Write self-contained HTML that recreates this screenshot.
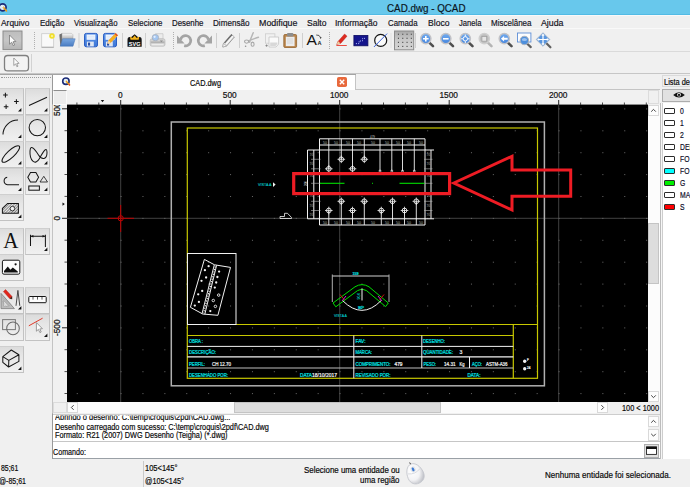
<!DOCTYPE html>
<html lang="pt-BR">
<head>
<meta charset="utf-8">
<title>CAD.dwg - QCAD</title>
<style>
html,body{margin:0;padding:0;}
body{width:690px;height:487px;overflow:hidden;background:#f0f0f0;position:relative;
 font-family:"Liberation Sans","DejaVu Sans",sans-serif;font-size:8.3px;color:#111;}
.abs{position:absolute;}
.tx{position:absolute;white-space:nowrap;display:inline-block;transform-origin:0 50%;-webkit-text-stroke:0.18px currentColor;}
svg{position:absolute;overflow:visible;}
#title{left:0;top:0;width:690px;height:15px;background:#68c8ec;box-sizing:border-box;border-bottom:1px solid #52bbe5;}
#menubar{left:0;top:15px;width:690px;height:14px;background:#f0f0f0;box-sizing:border-box;border-top:1px solid #f9f9f9;border-bottom:1px solid #f9f9f9;}
#tb1{left:0;top:29px;width:690px;height:22px;background:#f0f0f0;border-bottom:1px solid #dadada;}
#tb2{left:0;top:52px;width:690px;height:21px;background:#f0f0f0;}
#sepline{left:0;top:73px;width:690px;height:1px;background:#c6c6c6;}
#sepline2{left:0;top:74px;width:356px;height:1px;background:#a4a4a4;}
#left{left:0;top:75px;width:52px;height:384px;background:#f0f0f0;}
.tbtn{position:absolute;width:23px;height:25px;border:1px solid #c2c2c2;border-top-color:#cfcfcf;border-left-color:#cdcdcd;
 background:linear-gradient(#dcdcdc,#e6e6e6 35%,#f0f0f0);box-sizing:content-box;}
#leftborder{left:52px;top:75px;width:1px;height:384px;background:linear-gradient(#999 0,#999 29px,#c4c4c4 30px,#c4c4c4 338px,#999 339px);}
#tab{left:53px;top:75px;width:302px;height:15px;background:#fff;}
#tabline{left:355px;top:89px;width:305px;height:1px;background:#c4c4c4;}
#tabside{left:355px;top:75px;width:1px;height:14px;background:#c4c4c4;}
#hruler{left:67px;top:90px;width:581px;height:15px;background:#f1f1f1;overflow:hidden;}
#vruler{left:53px;top:105px;width:14px;height:297px;background:#f1f1f1;overflow:hidden;}
#corner{left:53px;top:90px;width:14px;height:15px;background:#ececec;border:1px solid #fafafa;border-top-color:#8e8e8e;box-sizing:border-box}
#canvas{left:67px;top:105px;width:581px;height:297px;background:#000;overflow:hidden;}
#vscroll{left:648px;top:105px;width:12px;height:297px;background:#fcfcfc;}
#vcorner{left:648px;top:90px;width:11px;height:14px;background:#f0f0f0;border:1px solid #dcdcdc;box-sizing:border-box;}
#vthumb{left:648px;top:223px;width:11px;height:61px;background:#dddddd;border:1px solid #c4c4c4;box-sizing:border-box;}
#hscroll{left:67px;top:402px;width:541px;height:11px;background:#fbfbfb;}
#hthumb{left:234px;top:402px;width:207px;height:11px;background:#dddddd;border:1px solid #c4c4c4;box-sizing:border-box;}
#hcorner{left:53px;top:402px;width:14px;height:11px;background:#f0f0f0;border:1px solid #dcdcdc;box-sizing:border-box;}
.sbtn{position:absolute;background:#fdfdfd;border:1px solid #d9d9d9;box-sizing:border-box;}
#rightborder{left:660px;top:103px;width:3px;height:356px;background:linear-gradient(90deg,#bcbcbc 0,#bcbcbc 33%,#f6f6f6 33%,#f6f6f6 67%,#cdcdcd 67%);}
#rhead{left:662px;top:75px;width:28px;height:12px;background:#f0f0f0;border:1px solid #dadada;border-right:none;box-sizing:border-box;}
#eyebtn{left:662px;top:89px;width:30px;height:13px;background:#e1e1e1;border:1px solid #adadad;box-sizing:border-box;}
#rlist{left:663px;top:103px;width:27px;height:356px;background:#fff;}
.sw{position:absolute;left:664px;width:11px;height:6px;border:1px solid #2c2c2c;box-sizing:border-box;border-radius:1px;}
#log{left:53px;top:414px;width:607px;height:26px;background:#fff;border-top:1px solid #cdcdcd;border-bottom:1px solid #c6c6c6;overflow:hidden;box-sizing:content-box;}
#cmd{left:53px;top:442px;width:607px;height:16px;background:#fff;}
#cmdline{left:53px;top:458px;width:607px;height:1px;background:#9aa0a6;}
#logscroll{left:648px;top:415px;width:12px;height:26px;background:#f0f0f0;}
#status{left:0;top:459px;width:690px;height:28px;background:#f0f0f0;}
#stsep{left:143px;top:461px;width:1px;height:26px;background:#c9c9c9;}
</style>
</head>
<body>

<!-- title bar -->
<div id="title" class="abs"></div>
<!-- menu bar -->
<div id="menubar" class="abs"></div>
<!-- toolbars -->
<div id="tb1" class="abs"></div>
<div id="tb2" class="abs"></div>
<div id="sepline" class="abs"></div>
<div id="sepline2" class="abs"></div>

<!-- left tool panel -->
<div id="left" class="abs"></div>
<div class="tbtn" style="left:-1px;top:88px"></div>
<div class="tbtn" style="left:25px;top:88px"></div>
<div class="tbtn" style="left:-1px;top:114.5px"></div>
<div class="tbtn" style="left:25px;top:114.5px"></div>
<div class="tbtn" style="left:-1px;top:141px"></div>
<div class="tbtn" style="left:25px;top:141px"></div>
<div class="tbtn" style="left:-1px;top:167.5px"></div>
<div class="tbtn" style="left:25px;top:167.5px"></div>
<div class="tbtn" style="left:-1px;top:194px"></div>
<div class="tbtn" style="left:-1px;top:227.5px"></div>
<div class="tbtn" style="left:25px;top:227.5px"></div>
<div class="tbtn" style="left:-1px;top:254px"></div>
<div class="tbtn" style="left:-1px;top:287px"></div>
<div class="tbtn" style="left:25px;top:287px"></div>
<div class="tbtn" style="left:-1px;top:313.5px"></div>
<div class="tbtn" style="left:25px;top:313.5px"></div>
<div class="tbtn" style="left:-1px;top:345.5px"></div>
<div class="abs" style="left:1px;top:77px;width:50px;height:0;border-top:1px dotted #9a9a9a"></div>
<div id="leftborder" class="abs"></div>

<!-- document area -->
<div id="tab" class="abs"></div>
<div id="tabline" class="abs"></div>
<div id="tabside" class="abs"></div>
<div id="corner" class="abs"></div>
<div id="hruler" class="abs"></div>
<div id="vruler" class="abs"></div>
<div class="abs" style="left:67px;top:104px;width:581px;height:1px;background:#8a8a8a"></div>
<div id="canvas" class="abs">
<svg style="left:0;top:0" width="581" height="297" viewBox="67 105 581 297" font-family="Liberation Sans, sans-serif">
<defs><pattern id="grid" x="120.55" y="217.9" width="21.9" height="21.9" patternUnits="userSpaceOnUse"><rect x="0" y="0" width="1" height="1" fill="#6a6a6a"/></pattern></defs>
<rect x="67" y="105" width="581" height="297" fill="#000"/>
<line x1="120.70" y1="105" x2="120.70" y2="402" stroke="#414141" stroke-width="1"/>
<line x1="339.70" y1="105" x2="339.70" y2="402" stroke="#414141" stroke-width="1"/>
<line x1="558.70" y1="105" x2="558.70" y2="402" stroke="#414141" stroke-width="1"/>
<line x1="67" y1="218.3" x2="648" y2="218.3" stroke="#414141" stroke-width="1"/>
<rect x="67" y="105" width="581" height="297" fill="url(#grid)"/>
<rect x="171.3" y="122" width="373.09999999999997" height="263.8" fill="none" stroke="#b0b0b0" stroke-width="1.5"/>
<rect x="187.3" y="128" width="350.2" height="250.3" fill="none" stroke="#c8c800" stroke-width="1.2"/>
<line x1="187.3" y1="324.5" x2="537.5" y2="324.5" stroke="#c8c800" stroke-width="1.2"/>
<line x1="187.3" y1="335.5" x2="513.3" y2="335.5" stroke="#c8c800" stroke-width="1.2"/>
<line x1="513.3" y1="324.5" x2="513.3" y2="378.3" stroke="#c8c800" stroke-width="1.2"/>
<line x1="187.3" y1="346.4" x2="513.3" y2="346.4" stroke="#f2f2f2" stroke-width="1"/>
<line x1="187.3" y1="356.9" x2="513.3" y2="356.9" stroke="#f2f2f2" stroke-width="1.2"/>
<line x1="187.3" y1="368" x2="513.3" y2="368" stroke="#bdbdbd" stroke-width="1.2"/>
<line x1="353.8" y1="335.5" x2="353.8" y2="378.3" stroke="#f2f2f2" stroke-width="1"/>
<line x1="421.8" y1="335.5" x2="421.8" y2="368" stroke="#f2f2f2" stroke-width="1"/>
<line x1="469.5" y1="357" x2="469.5" y2="368" stroke="#f2f2f2" stroke-width="1"/>
<text x="189" y="343.1" font-size="5.1" fill="#00e6e6" stroke="#00e6e6" stroke-width="0.22" text-anchor="start" textLength="14" lengthAdjust="spacingAndGlyphs">OBRA :</text>
<text x="189" y="354.3" font-size="5.1" fill="#00e6e6" stroke="#00e6e6" stroke-width="0.22" text-anchor="start" textLength="27" lengthAdjust="spacingAndGlyphs">DESCRIÇÃO:</text>
<text x="189" y="365.6" font-size="5.1" fill="#00e6e6" stroke="#00e6e6" stroke-width="0.22" text-anchor="start" textLength="16" lengthAdjust="spacingAndGlyphs">PERFIL:</text>
<text x="212" y="365.6" font-size="5.1" fill="#f2f2f2" stroke="#f2f2f2" stroke-width="0.22" text-anchor="start" textLength="19" lengthAdjust="spacingAndGlyphs">CH 12.70</text>
<text x="189" y="376.8" font-size="5.1" fill="#00e6e6" stroke="#00e6e6" stroke-width="0.22" text-anchor="start" textLength="39" lengthAdjust="spacingAndGlyphs">DESENHADO POR:</text>
<text x="300" y="376.8" font-size="5.1" fill="#00e6e6" stroke="#00e6e6" stroke-width="0.22" text-anchor="start" textLength="12" lengthAdjust="spacingAndGlyphs">DATA</text>
<text x="312" y="376.8" font-size="5.1" fill="#f2f2f2" stroke="#f2f2f2" stroke-width="0.22" text-anchor="start" textLength="25" lengthAdjust="spacingAndGlyphs">18/10/2017</text>
<text x="355.5" y="343.1" font-size="5.1" fill="#00e6e6" stroke="#00e6e6" stroke-width="0.22" text-anchor="start" textLength="10" lengthAdjust="spacingAndGlyphs">FAV:</text>
<text x="355.5" y="354.3" font-size="5.1" fill="#00e6e6" stroke="#00e6e6" stroke-width="0.22" text-anchor="start" textLength="16.5" lengthAdjust="spacingAndGlyphs">MARCA:</text>
<text x="355.5" y="365.6" font-size="5.1" fill="#00e6e6" stroke="#00e6e6" stroke-width="0.22" text-anchor="start" textLength="35" lengthAdjust="spacingAndGlyphs">COMPRIMENTO:</text>
<text x="394.5" y="365.6" font-size="5.1" fill="#f2f2f2" stroke="#f2f2f2" stroke-width="0.22" text-anchor="start" textLength="8" lengthAdjust="spacingAndGlyphs">479</text>
<text x="355.5" y="376.8" font-size="5.1" fill="#00e6e6" stroke="#00e6e6" stroke-width="0.22" text-anchor="start" textLength="35" lengthAdjust="spacingAndGlyphs">REVISADO POR:</text>
<text x="423" y="343.1" font-size="5.1" fill="#00e6e6" stroke="#00e6e6" stroke-width="0.22" text-anchor="start" textLength="22" lengthAdjust="spacingAndGlyphs">DESENHO:</text>
<text x="423" y="354.3" font-size="5.1" fill="#00e6e6" stroke="#00e6e6" stroke-width="0.22" text-anchor="start" textLength="30" lengthAdjust="spacingAndGlyphs">QUANTIDADE:</text>
<text x="459.5" y="354.3" font-size="5.1" fill="#f2f2f2" stroke="#f2f2f2" stroke-width="0.22" text-anchor="start">3</text>
<text x="423.5" y="365.6" font-size="5.1" fill="#00e6e6" stroke="#00e6e6" stroke-width="0.22" text-anchor="start" textLength="12.5" lengthAdjust="spacingAndGlyphs">PESO:</text>
<text x="444" y="365.6" font-size="5.1" fill="#f2f2f2" stroke="#f2f2f2" stroke-width="0.22" text-anchor="start" textLength="11.5" lengthAdjust="spacingAndGlyphs">14.31</text>
<text x="459.5" y="365.6" font-size="5.1" fill="#f2f2f2" stroke="#f2f2f2" stroke-width="0.22" text-anchor="start" textLength="5" lengthAdjust="spacingAndGlyphs">Kg</text>
<text x="472" y="365.6" font-size="5.1" fill="#00e6e6" stroke="#00e6e6" stroke-width="0.22" text-anchor="start" textLength="10" lengthAdjust="spacingAndGlyphs">AÇO:</text>
<text x="486" y="365.6" font-size="5.1" fill="#f2f2f2" stroke="#f2f2f2" stroke-width="0.22" text-anchor="start" textLength="21.5" lengthAdjust="spacingAndGlyphs">ASTM-A36</text>
<text x="467.5" y="376.8" font-size="5.1" fill="#00e6e6" stroke="#00e6e6" stroke-width="0.22" text-anchor="start" textLength="13" lengthAdjust="spacingAndGlyphs">DATA:</text>
<circle cx="524.7" cy="361.3" r="1.7" fill="#f2f2f2"/>
<text x="527" y="361.0" font-size="3" fill="#f2f2f2" stroke="#f2f2f2" stroke-width="0.22" text-anchor="start">F</text>
<circle cx="524.7" cy="368.8" r="1.7" fill="#f2f2f2"/>
<text x="527" y="368.5" font-size="3" fill="#f2f2f2" stroke="#f2f2f2" stroke-width="0.22" text-anchor="start">24</text>
<rect x="187.5" y="253.5" width="48.5" height="71.0" fill="none" stroke="#f2f2f2" stroke-width="1"/>
<path d="M204.4,259.4 L214.5,264.8 L230.5,267.4 L217.9,315.3 L202.7,314 L190.4,307.3 Z M214.3,264.8 L202,313.8 M216.6,265.3 L204.8,314.3" fill="none" stroke="#f2f2f2" stroke-width="1" stroke-linejoin="round"/>
<path d="M215.4,266.5 L203.6,313" fill="none" stroke="#f2f2f2" stroke-width="1.2" stroke-dasharray="1.2,1.3"/>
<circle cx="208.6" cy="266.2" r="1.15" fill="#f2f2f2"/>
<circle cx="204.9" cy="270.2" r="1.15" fill="#f2f2f2"/>
<circle cx="206.1" cy="277.5" r="1.15" fill="#f2f2f2"/>
<circle cx="201.5" cy="280.8" r="1.15" fill="#f2f2f2"/>
<circle cx="202.2" cy="290.9" r="1.15" fill="#f2f2f2"/>
<circle cx="198.2" cy="294.3" r="1.15" fill="#f2f2f2"/>
<circle cx="198.9" cy="301.9" r="1.15" fill="#f2f2f2"/>
<circle cx="194.8" cy="305.6" r="1.15" fill="#f2f2f2"/>
<circle cx="219.1" cy="271.6" r="1.15" fill="#f2f2f2"/>
<circle cx="217.4" cy="277" r="1.15" fill="#f2f2f2"/>
<circle cx="216.2" cy="282.5" r="1.15" fill="#f2f2f2"/>
<circle cx="214.8" cy="287.6" r="1.15" fill="#f2f2f2"/>
<circle cx="210.3" cy="311.1" r="1.15" fill="#f2f2f2"/>
<circle cx="218.7" cy="295.1" r="1.25" fill="none" stroke="#f2f2f2" stroke-width="0.9"/>
<circle cx="213.3" cy="300.5" r="1.25" fill="none" stroke="#f2f2f2" stroke-width="0.9"/>
<circle cx="215.4" cy="306.4" r="1.25" fill="none" stroke="#f2f2f2" stroke-width="0.9"/>
<line x1="332.3" y1="276" x2="389" y2="276" stroke="#d0d0d0" stroke-width="1"/>
<line x1="332.3" y1="274.5" x2="332.3" y2="302" stroke="#b0b0b0" stroke-width="1"/>
<line x1="389" y1="274.5" x2="389" y2="302" stroke="#b0b0b0" stroke-width="1"/>
<path d="M333,303 L355,286.8 Q362,282.5 369,286.8 L388.3,303 L385.6,306.6 L366.5,290.6 Q362,287.6 357.5,290.6 L335.8,306.8 Z" fill="none" stroke="#00e000" stroke-width="1"/>
<path d="M342.7,300.7 Q362,320 381,300.7" fill="none" stroke="#f2f2f2" stroke-width="1"/>
<line x1="362" y1="288.5" x2="362" y2="300.5" stroke="#f2f2f2" stroke-width="1"/>
<line x1="340" y1="294.5" x2="344.5" y2="300" stroke="#d01010" stroke-width="1"/>
<line x1="342" y1="301" x2="346" y2="296" stroke="#d020d0" stroke-width="1"/>
<line x1="379.5" y1="300" x2="384" y2="294.5" stroke="#d01010" stroke-width="1"/>
<line x1="378" y1="296" x2="382" y2="301" stroke="#d020d0" stroke-width="1"/>
<text x="352.5" y="275" font-size="3.6" fill="#00e6e6" stroke="#00e6e6" stroke-width="0.22" text-anchor="start" textLength="6" lengthAdjust="spacingAndGlyphs">159</text>
<text x="358" y="308.5" font-size="3.6" fill="#00e6e6" stroke="#00e6e6" stroke-width="0.22" text-anchor="start" textLength="6" lengthAdjust="spacingAndGlyphs">90°</text>
<text x="359.5" y="299.5" font-size="3.4" fill="#00e6e6" transform="rotate(-90 359.5 299.5)">90,0</text>
<text x="334" y="317" font-size="4" fill="#00c8c8" stroke="#00c8c8" stroke-width="0.1" text-anchor="start" textLength="13" lengthAdjust="spacingAndGlyphs">VISTA A</text>
<rect x="319.5" y="150" width="105.5" height="68.80000000000001" fill="none" stroke="#f2f2f2" stroke-width="1"/>
<line x1="319.5" y1="138.8" x2="425" y2="138.8" stroke="#f2f2f2" stroke-width="1"/>
<line x1="319.5" y1="145" x2="425" y2="145" stroke="#f2f2f2" stroke-width="1"/>
<line x1="319.5" y1="138.8" x2="319.5" y2="150" stroke="#f2f2f2" stroke-width="1"/>
<line x1="425" y1="138.8" x2="425" y2="150" stroke="#f2f2f2" stroke-width="1"/>
<line x1="319.5" y1="225" x2="425" y2="225" stroke="#f2f2f2" stroke-width="1"/>
<line x1="319.5" y1="218.8" x2="319.5" y2="225" stroke="#f2f2f2" stroke-width="1"/>
<line x1="425" y1="218.8" x2="425" y2="225" stroke="#f2f2f2" stroke-width="1"/>
<line x1="307.5" y1="150" x2="307.5" y2="218.8" stroke="#f2f2f2" stroke-width="1"/>
<line x1="313.8" y1="150" x2="313.8" y2="218.8" stroke="#f2f2f2" stroke-width="1"/>
<line x1="307.5" y1="150" x2="319.5" y2="150" stroke="#f2f2f2" stroke-width="1"/>
<line x1="307.5" y1="218.8" x2="319.5" y2="218.8" stroke="#f2f2f2" stroke-width="1"/>
<line x1="431" y1="150" x2="431" y2="218.8" stroke="#f2f2f2" stroke-width="1"/>
<line x1="425" y1="150" x2="434" y2="150" stroke="#f2f2f2" stroke-width="1"/>
<line x1="425" y1="218.8" x2="434" y2="218.8" stroke="#f2f2f2" stroke-width="1"/>
<line x1="328.8" y1="138.8" x2="328.8" y2="168.8" stroke="#f2f2f2" stroke-width="0.9"/>
<circle cx="328.8" cy="168.8" r="2.35" fill="none" stroke="#f2f2f2" stroke-width="0.9"/><line x1="325.0" y1="168.8" x2="332.6" y2="168.8" stroke="#f2f2f2" stroke-width="0.8"/><line x1="328.8" y1="165.0" x2="328.8" y2="172.60000000000002" stroke="#f2f2f2" stroke-width="0.8"/>
<line x1="341.3" y1="138.8" x2="341.3" y2="159.3" stroke="#f2f2f2" stroke-width="0.9"/>
<circle cx="341.3" cy="159.3" r="2.35" fill="none" stroke="#f2f2f2" stroke-width="0.9"/><line x1="337.5" y1="159.3" x2="345.1" y2="159.3" stroke="#f2f2f2" stroke-width="0.8"/><line x1="341.3" y1="155.5" x2="341.3" y2="163.10000000000002" stroke="#f2f2f2" stroke-width="0.8"/>
<line x1="352.5" y1="138.8" x2="352.5" y2="168.8" stroke="#f2f2f2" stroke-width="0.9"/>
<circle cx="352.5" cy="168.8" r="2.35" fill="none" stroke="#f2f2f2" stroke-width="0.9"/><line x1="348.7" y1="168.8" x2="356.3" y2="168.8" stroke="#f2f2f2" stroke-width="0.8"/><line x1="352.5" y1="165.0" x2="352.5" y2="172.60000000000002" stroke="#f2f2f2" stroke-width="0.8"/>
<line x1="364.3" y1="138.8" x2="364.3" y2="159.3" stroke="#f2f2f2" stroke-width="0.9"/>
<circle cx="364.3" cy="159.3" r="2.35" fill="none" stroke="#f2f2f2" stroke-width="0.9"/><line x1="360.5" y1="159.3" x2="368.1" y2="159.3" stroke="#f2f2f2" stroke-width="0.8"/><line x1="364.3" y1="155.5" x2="364.3" y2="163.10000000000002" stroke="#f2f2f2" stroke-width="0.8"/>
<line x1="380" y1="138.8" x2="380" y2="171" stroke="#f2f2f2" stroke-width="0.9"/>
<circle cx="380" cy="171" r="1" fill="none" stroke="#f2f2f2" stroke-width="0.7"/>
<line x1="391.8" y1="138.8" x2="391.8" y2="171" stroke="#f2f2f2" stroke-width="0.9"/>
<circle cx="391.8" cy="171" r="1" fill="none" stroke="#f2f2f2" stroke-width="0.7"/>
<line x1="402.5" y1="138.8" x2="402.5" y2="171" stroke="#f2f2f2" stroke-width="0.9"/>
<circle cx="402.5" cy="171" r="1" fill="none" stroke="#f2f2f2" stroke-width="0.7"/>
<line x1="414.3" y1="138.8" x2="414.3" y2="171" stroke="#f2f2f2" stroke-width="0.9"/>
<circle cx="414.3" cy="171" r="1" fill="none" stroke="#f2f2f2" stroke-width="0.7"/>
<line x1="328.8" y1="210.5" x2="328.8" y2="225" stroke="#f2f2f2" stroke-width="0.9"/>
<circle cx="328.8" cy="210.5" r="2.35" fill="none" stroke="#f2f2f2" stroke-width="0.9"/><line x1="325.0" y1="210.5" x2="332.6" y2="210.5" stroke="#f2f2f2" stroke-width="0.8"/><line x1="328.8" y1="206.7" x2="328.8" y2="214.3" stroke="#f2f2f2" stroke-width="0.8"/>
<line x1="341.3" y1="201.3" x2="341.3" y2="225" stroke="#f2f2f2" stroke-width="0.9"/>
<circle cx="341.3" cy="201.3" r="2.35" fill="none" stroke="#f2f2f2" stroke-width="0.9"/><line x1="337.5" y1="201.3" x2="345.1" y2="201.3" stroke="#f2f2f2" stroke-width="0.8"/><line x1="341.3" y1="197.5" x2="341.3" y2="205.10000000000002" stroke="#f2f2f2" stroke-width="0.8"/>
<line x1="352.5" y1="210.5" x2="352.5" y2="225" stroke="#f2f2f2" stroke-width="0.9"/>
<circle cx="352.5" cy="210.5" r="2.35" fill="none" stroke="#f2f2f2" stroke-width="0.9"/><line x1="348.7" y1="210.5" x2="356.3" y2="210.5" stroke="#f2f2f2" stroke-width="0.8"/><line x1="352.5" y1="206.7" x2="352.5" y2="214.3" stroke="#f2f2f2" stroke-width="0.8"/>
<line x1="364.3" y1="201.3" x2="364.3" y2="225" stroke="#f2f2f2" stroke-width="0.9"/>
<circle cx="364.3" cy="201.3" r="2.35" fill="none" stroke="#f2f2f2" stroke-width="0.9"/><line x1="360.5" y1="201.3" x2="368.1" y2="201.3" stroke="#f2f2f2" stroke-width="0.8"/><line x1="364.3" y1="197.5" x2="364.3" y2="205.10000000000002" stroke="#f2f2f2" stroke-width="0.8"/>
<line x1="381.3" y1="210.5" x2="381.3" y2="225" stroke="#f2f2f2" stroke-width="0.9"/>
<circle cx="381.3" cy="210.5" r="2.35" fill="none" stroke="#f2f2f2" stroke-width="0.9"/><line x1="377.5" y1="210.5" x2="385.1" y2="210.5" stroke="#f2f2f2" stroke-width="0.8"/><line x1="381.3" y1="206.7" x2="381.3" y2="214.3" stroke="#f2f2f2" stroke-width="0.8"/>
<line x1="392.5" y1="201.3" x2="392.5" y2="225" stroke="#f2f2f2" stroke-width="0.9"/>
<circle cx="392.5" cy="201.3" r="2.35" fill="none" stroke="#f2f2f2" stroke-width="0.9"/><line x1="388.7" y1="201.3" x2="396.3" y2="201.3" stroke="#f2f2f2" stroke-width="0.8"/><line x1="392.5" y1="197.5" x2="392.5" y2="205.10000000000002" stroke="#f2f2f2" stroke-width="0.8"/>
<line x1="404.5" y1="210.5" x2="404.5" y2="225" stroke="#f2f2f2" stroke-width="0.9"/>
<circle cx="404.5" cy="210.5" r="2.35" fill="none" stroke="#f2f2f2" stroke-width="0.9"/><line x1="400.7" y1="210.5" x2="408.3" y2="210.5" stroke="#f2f2f2" stroke-width="0.8"/><line x1="404.5" y1="206.7" x2="404.5" y2="214.3" stroke="#f2f2f2" stroke-width="0.8"/>
<line x1="416.3" y1="201.3" x2="416.3" y2="225" stroke="#f2f2f2" stroke-width="0.9"/>
<circle cx="416.3" cy="201.3" r="2.35" fill="none" stroke="#f2f2f2" stroke-width="0.9"/><line x1="412.5" y1="201.3" x2="420.1" y2="201.3" stroke="#f2f2f2" stroke-width="0.8"/><line x1="416.3" y1="197.5" x2="416.3" y2="205.10000000000002" stroke="#f2f2f2" stroke-width="0.8"/>
<line x1="311" y1="159.3" x2="320.5" y2="159.3" stroke="#bbb" stroke-width="0.6"/>
<line x1="424" y1="159.3" x2="432.5" y2="159.3" stroke="#bbb" stroke-width="0.6"/>
<line x1="311" y1="168.8" x2="320.5" y2="168.8" stroke="#bbb" stroke-width="0.6"/>
<line x1="424" y1="168.8" x2="432.5" y2="168.8" stroke="#bbb" stroke-width="0.6"/>
<line x1="311" y1="183.3" x2="320.5" y2="183.3" stroke="#bbb" stroke-width="0.6"/>
<line x1="424" y1="183.3" x2="432.5" y2="183.3" stroke="#bbb" stroke-width="0.6"/>
<line x1="311" y1="201.3" x2="320.5" y2="201.3" stroke="#bbb" stroke-width="0.6"/>
<line x1="424" y1="201.3" x2="432.5" y2="201.3" stroke="#bbb" stroke-width="0.6"/>
<line x1="311" y1="210.5" x2="320.5" y2="210.5" stroke="#bbb" stroke-width="0.6"/>
<line x1="424" y1="210.5" x2="432.5" y2="210.5" stroke="#bbb" stroke-width="0.6"/>
<text x="323" y="144" font-size="3" fill="#b4b4b4" stroke="#b4b4b4" stroke-width="0" text-anchor="start" textLength="4" lengthAdjust="spacingAndGlyphs">50</text>
<text x="323" y="224" font-size="3" fill="#b4b4b4" stroke="#b4b4b4" stroke-width="0" text-anchor="start" textLength="4" lengthAdjust="spacingAndGlyphs">50</text>
<text x="334" y="144" font-size="3" fill="#b4b4b4" stroke="#b4b4b4" stroke-width="0" text-anchor="start" textLength="4" lengthAdjust="spacingAndGlyphs">50</text>
<text x="334" y="224" font-size="3" fill="#b4b4b4" stroke="#b4b4b4" stroke-width="0" text-anchor="start" textLength="4" lengthAdjust="spacingAndGlyphs">50</text>
<text x="346" y="144" font-size="3" fill="#b4b4b4" stroke="#b4b4b4" stroke-width="0" text-anchor="start" textLength="4" lengthAdjust="spacingAndGlyphs">50</text>
<text x="346" y="224" font-size="3" fill="#b4b4b4" stroke="#b4b4b4" stroke-width="0" text-anchor="start" textLength="4" lengthAdjust="spacingAndGlyphs">50</text>
<text x="357" y="144" font-size="3" fill="#b4b4b4" stroke="#b4b4b4" stroke-width="0" text-anchor="start" textLength="4" lengthAdjust="spacingAndGlyphs">50</text>
<text x="357" y="224" font-size="3" fill="#b4b4b4" stroke="#b4b4b4" stroke-width="0" text-anchor="start" textLength="4" lengthAdjust="spacingAndGlyphs">50</text>
<text x="371" y="144" font-size="3" fill="#b4b4b4" stroke="#b4b4b4" stroke-width="0" text-anchor="start" textLength="4" lengthAdjust="spacingAndGlyphs">50</text>
<text x="371" y="224" font-size="3" fill="#b4b4b4" stroke="#b4b4b4" stroke-width="0" text-anchor="start" textLength="4" lengthAdjust="spacingAndGlyphs">50</text>
<text x="385" y="144" font-size="3" fill="#b4b4b4" stroke="#b4b4b4" stroke-width="0" text-anchor="start" textLength="4" lengthAdjust="spacingAndGlyphs">50</text>
<text x="385" y="224" font-size="3" fill="#b4b4b4" stroke="#b4b4b4" stroke-width="0" text-anchor="start" textLength="4" lengthAdjust="spacingAndGlyphs">50</text>
<text x="396" y="144" font-size="3" fill="#b4b4b4" stroke="#b4b4b4" stroke-width="0" text-anchor="start" textLength="4" lengthAdjust="spacingAndGlyphs">50</text>
<text x="396" y="224" font-size="3" fill="#b4b4b4" stroke="#b4b4b4" stroke-width="0" text-anchor="start" textLength="4" lengthAdjust="spacingAndGlyphs">50</text>
<text x="407" y="144" font-size="3" fill="#b4b4b4" stroke="#b4b4b4" stroke-width="0" text-anchor="start" textLength="4" lengthAdjust="spacingAndGlyphs">50</text>
<text x="407" y="224" font-size="3" fill="#b4b4b4" stroke="#b4b4b4" stroke-width="0" text-anchor="start" textLength="4" lengthAdjust="spacingAndGlyphs">50</text>
<text x="419" y="144" font-size="3" fill="#b4b4b4" stroke="#b4b4b4" stroke-width="0" text-anchor="start" textLength="4" lengthAdjust="spacingAndGlyphs">50</text>
<text x="419" y="224" font-size="3" fill="#b4b4b4" stroke="#b4b4b4" stroke-width="0" text-anchor="start" textLength="4" lengthAdjust="spacingAndGlyphs">50</text>
<text x="370" y="138" font-size="3" fill="#c4c4c4" stroke="#c4c4c4" stroke-width="0" text-anchor="start" textLength="5" lengthAdjust="spacingAndGlyphs">479</text>
<text x="312.8" y="156" font-size="3" fill="#b4b4b4" transform="rotate(-90 312.8 156)">35</text>
<text x="430.3" y="156" font-size="3" fill="#b4b4b4" transform="rotate(-90 430.3 156)">35</text>
<text x="312.8" y="165" font-size="3" fill="#b4b4b4" transform="rotate(-90 312.8 165)">35</text>
<text x="430.3" y="165" font-size="3" fill="#b4b4b4" transform="rotate(-90 430.3 165)">35</text>
<text x="312.8" y="177" font-size="3" fill="#b4b4b4" transform="rotate(-90 312.8 177)">35</text>
<text x="430.3" y="177" font-size="3" fill="#b4b4b4" transform="rotate(-90 430.3 177)">35</text>
<text x="312.8" y="197" font-size="3" fill="#b4b4b4" transform="rotate(-90 312.8 197)">35</text>
<text x="430.3" y="197" font-size="3" fill="#b4b4b4" transform="rotate(-90 430.3 197)">35</text>
<text x="312.8" y="207" font-size="3" fill="#b4b4b4" transform="rotate(-90 312.8 207)">35</text>
<text x="430.3" y="207" font-size="3" fill="#b4b4b4" transform="rotate(-90 430.3 207)">35</text>
<text x="312.8" y="216" font-size="3" fill="#b4b4b4" transform="rotate(-90 312.8 216)">35</text>
<text x="430.3" y="216" font-size="3" fill="#b4b4b4" transform="rotate(-90 430.3 216)">35</text>
<text x="306.8" y="186" font-size="3" fill="#f2f2f2" transform="rotate(-90 306.8 186)">200</text>
<line x1="320" y1="183.3" x2="344.5" y2="183.3" stroke="#00e000" stroke-width="1.1"/>
<line x1="399.5" y1="183.3" x2="424.5" y2="183.3" stroke="#00e000" stroke-width="1.1"/>
<rect x="372" y="182.8" width="1" height="1" fill="#00e000"/>
<text x="258" y="186.2" font-size="3.8" fill="#00c8c8" stroke="#00c8c8" stroke-width="0.1" text-anchor="start" textLength="13.5" lengthAdjust="spacingAndGlyphs">VISTA A</text>
<path d="M273,182.3 L275.6,184.6 L273,187 Z" fill="#f2f2f2"/>
<path d="M280,216.5 L284.5,216.5 L284.5,213.3 L287.5,213.3 L291.5,217.5 L291.5,218.5 L280,218.5 Z" fill="none" stroke="#f2f2f2" stroke-width="0.8"/>
<rect x="293.7" y="173.6" width="155.90000000000003" height="20.0" fill="none" stroke="#ee1c24" stroke-width="3.2"/>
<path d="M453.8,183 L512,156.3 L512,170 L570.7,170 L570.7,196.3 L512,196.3 L512,210 Z" fill="none" stroke="#ee1c24" stroke-width="3" stroke-linejoin="miter"/>
<line x1="107.5" y1="218.3" x2="134" y2="218.3" stroke="#c00000" stroke-width="1"/>
<line x1="120.7" y1="205" x2="120.7" y2="232" stroke="#c00000" stroke-width="1"/>
<circle cx="120.7" cy="218.3" r="2.6" fill="none" stroke="#c00000" stroke-width="1"/>
</svg>
</div>
<svg style="left:0;top:0" width="690" height="487" viewBox="0 0 690 487" font-family="Liberation Sans, sans-serif">
<line x1="76.90" y1="102.5" x2="76.90" y2="105" stroke="#222" stroke-width="0.8"/>
<line x1="98.80" y1="102.5" x2="98.80" y2="105" stroke="#222" stroke-width="0.8"/>
<line x1="120.70" y1="100" x2="120.70" y2="105" stroke="#222" stroke-width="1"/>
<line x1="142.60" y1="102.5" x2="142.60" y2="105" stroke="#222" stroke-width="0.8"/>
<line x1="164.50" y1="102.5" x2="164.50" y2="105" stroke="#222" stroke-width="0.8"/>
<line x1="186.40" y1="102.5" x2="186.40" y2="105" stroke="#222" stroke-width="0.8"/>
<line x1="208.30" y1="102.5" x2="208.30" y2="105" stroke="#222" stroke-width="0.8"/>
<line x1="230.20" y1="100" x2="230.20" y2="105" stroke="#222" stroke-width="1"/>
<line x1="252.10" y1="102.5" x2="252.10" y2="105" stroke="#222" stroke-width="0.8"/>
<line x1="274.00" y1="102.5" x2="274.00" y2="105" stroke="#222" stroke-width="0.8"/>
<line x1="295.90" y1="102.5" x2="295.90" y2="105" stroke="#222" stroke-width="0.8"/>
<line x1="317.80" y1="102.5" x2="317.80" y2="105" stroke="#222" stroke-width="0.8"/>
<line x1="339.70" y1="100" x2="339.70" y2="105" stroke="#222" stroke-width="1"/>
<line x1="361.60" y1="102.5" x2="361.60" y2="105" stroke="#222" stroke-width="0.8"/>
<line x1="383.50" y1="102.5" x2="383.50" y2="105" stroke="#222" stroke-width="0.8"/>
<line x1="405.40" y1="102.5" x2="405.40" y2="105" stroke="#222" stroke-width="0.8"/>
<line x1="427.30" y1="102.5" x2="427.30" y2="105" stroke="#222" stroke-width="0.8"/>
<line x1="449.20" y1="100" x2="449.20" y2="105" stroke="#222" stroke-width="1"/>
<line x1="471.10" y1="102.5" x2="471.10" y2="105" stroke="#222" stroke-width="0.8"/>
<line x1="493.00" y1="102.5" x2="493.00" y2="105" stroke="#222" stroke-width="0.8"/>
<line x1="514.90" y1="102.5" x2="514.90" y2="105" stroke="#222" stroke-width="0.8"/>
<line x1="536.80" y1="102.5" x2="536.80" y2="105" stroke="#222" stroke-width="0.8"/>
<line x1="558.70" y1="100" x2="558.70" y2="105" stroke="#222" stroke-width="1"/>
<line x1="580.60" y1="102.5" x2="580.60" y2="105" stroke="#222" stroke-width="0.8"/>
<line x1="602.50" y1="102.5" x2="602.50" y2="105" stroke="#222" stroke-width="0.8"/>
<line x1="624.40" y1="102.5" x2="624.40" y2="105" stroke="#222" stroke-width="0.8"/>
<line x1="646.30" y1="102.5" x2="646.30" y2="105" stroke="#222" stroke-width="0.8"/>
<line x1="62" y1="108.80" x2="67" y2="108.80" stroke="#222" stroke-width="1"/>
<line x1="64.5" y1="130.70" x2="67" y2="130.70" stroke="#222" stroke-width="0.8"/>
<line x1="64.5" y1="152.60" x2="67" y2="152.60" stroke="#222" stroke-width="0.8"/>
<line x1="64.5" y1="174.50" x2="67" y2="174.50" stroke="#222" stroke-width="0.8"/>
<line x1="64.5" y1="196.40" x2="67" y2="196.40" stroke="#222" stroke-width="0.8"/>
<line x1="62" y1="218.30" x2="67" y2="218.30" stroke="#222" stroke-width="1"/>
<line x1="64.5" y1="240.20" x2="67" y2="240.20" stroke="#222" stroke-width="0.8"/>
<line x1="64.5" y1="262.10" x2="67" y2="262.10" stroke="#222" stroke-width="0.8"/>
<line x1="64.5" y1="284.00" x2="67" y2="284.00" stroke="#222" stroke-width="0.8"/>
<line x1="64.5" y1="305.90" x2="67" y2="305.90" stroke="#222" stroke-width="0.8"/>
<line x1="62" y1="327.80" x2="67" y2="327.80" stroke="#222" stroke-width="1"/>
<line x1="64.5" y1="349.70" x2="67" y2="349.70" stroke="#222" stroke-width="0.8"/>
<line x1="64.5" y1="371.60" x2="67" y2="371.60" stroke="#222" stroke-width="0.8"/>
<line x1="64.5" y1="393.50" x2="67" y2="393.50" stroke="#222" stroke-width="0.8"/>
<text x="120.2" y="97.8" font-size="8.3" fill="#111" stroke="#111" stroke-width="0.2" text-anchor="middle">0</text>
<text x="229.7" y="97.8" font-size="8.3" fill="#111" stroke="#111" stroke-width="0.2" text-anchor="middle">500</text>
<text x="339.2" y="97.8" font-size="8.3" fill="#111" stroke="#111" stroke-width="0.2" text-anchor="middle">1000</text>
<text x="448.7" y="97.8" font-size="8.3" fill="#111" stroke="#111" stroke-width="0.2" text-anchor="middle">1500</text>
<text x="558.2" y="97.8" font-size="8.3" fill="#111" stroke="#111" stroke-width="0.2" text-anchor="middle">2000</text>
<clipPath id="vrc"><rect x="53" y="105" width="14" height="297"/></clipPath><g clip-path="url(#vrc)">
<text x="60.4" y="109.3" font-size="9.2" fill="#111" stroke="#111" stroke-width="0.25" text-anchor="middle" transform="rotate(-90 60.4 109.3)" textLength="13.4" lengthAdjust="spacingAndGlyphs">500</text>
<text x="60.4" y="218.3" font-size="9.2" fill="#111" stroke="#111" stroke-width="0.25" text-anchor="middle" transform="rotate(-90 60.4 218.3)" textLength="4.5" lengthAdjust="spacingAndGlyphs">0</text>
<text x="60.4" y="327.8" font-size="9.2" fill="#111" stroke="#111" stroke-width="0.25" text-anchor="middle" transform="rotate(-90 60.4 327.8)" textLength="16.6" lengthAdjust="spacingAndGlyphs">-500</text>
</g>
<path d="M100.8,100 L104.2,100 L102.5,102.3 Z" fill="#111"/>
<path d="M62.5,202.4 L62.5,205.8 L64.8,204.1 Z" fill="#111"/>
</svg>
<div id="vcorner" class="abs"></div>
<div id="vscroll" class="abs"></div>
<div id="vthumb" class="abs"></div>
<div id="hcorner" class="abs"></div>
<div id="hscroll" class="abs"></div>
<div id="hthumb" class="abs"></div>

<!-- command log -->
<div id="log" class="abs"></div>
<div id="logscroll" class="abs"></div>
<div id="cmd" class="abs"></div>
<div id="cmdline" class="abs"></div>
<div class="sbtn" style="left:67px;top:402px;width:11px;height:11px"></div>
<div class="sbtn" style="left:597px;top:402px;width:11px;height:11px"></div>
<div class="sbtn" style="left:648px;top:105px;width:11px;height:11px"></div>
<div class="sbtn" style="left:648px;top:391px;width:11px;height:11px"></div>
<div class="sbtn" style="left:648px;top:416px;width:11px;height:11px"></div>
<div class="sbtn" style="left:648px;top:429px;width:11px;height:12px"></div>
<svg style="left:0;top:0" width="690" height="487" viewBox="0 0 690 487"><path d="M73.65,405.2 L71.35,407.5 L73.65,409.8" fill="none" stroke="#444" stroke-width="1"/><path d="M601.35,405.2 L603.65,407.5 L601.35,409.8" fill="none" stroke="#444" stroke-width="1"/><path d="M651.2,111.65 L653.5,109.35 L655.8,111.65" fill="none" stroke="#444" stroke-width="1"/><path d="M651.2,395.35 L653.5,397.65 L655.8,395.35" fill="none" stroke="#444" stroke-width="1"/><path d="M651.2,422.65 L653.5,420.35 L655.8,422.65" fill="none" stroke="#444" stroke-width="1"/><path d="M651.2,433.85 L653.5,436.15 L655.8,433.85" fill="none" stroke="#444" stroke-width="1"/></svg>

<!-- right panel: layer list -->
<div id="rightborder" class="abs"></div>
<div id="rhead" class="abs"></div>
<div id="eyebtn" class="abs"></div>
<div id="rlist" class="abs"></div>
<div class="sw" style="top:107.6px;background:#fff"></div>
<div class="sw" style="top:119.6px;background:#fff"></div>
<div class="sw" style="top:131.6px;background:#fff"></div>
<div class="sw" style="top:143.6px;background:#fff"></div>
<div class="sw" style="top:155.6px;background:#fff"></div>
<div class="sw" style="top:167.6px;background:#00ffff"></div>
<div class="sw" style="top:179.6px;background:#00f000"></div>
<div class="sw" style="top:191.6px;background:#fff"></div>
<div class="sw" style="top:203.6px;background:#ff0000"></div>

<!-- status bar -->
<div id="status" class="abs"></div>
<div id="stsep" class="abs"></div>

<!-- all text labels -->
<span class="tx" style="left:386.50px;top:1.60px;font-size:11px;line-height:13px;color:#0a141c;transform:scaleX(0.8919);">CAD.dwg - QCAD</span>
<span class="tx" style="left:0.50px;top:18.30px;font-size:8.3px;line-height:10px;color:#14141e;transform:scaleX(1.0127);">Arquivo</span>
<span class="tx" style="left:39.50px;top:18.30px;font-size:8.3px;line-height:10px;color:#14141e;transform:scaleX(0.9654);">Edição</span>
<span class="tx" style="left:73.50px;top:18.30px;font-size:8.3px;line-height:10px;color:#14141e;transform:scaleX(0.9365);">Visualização</span>
<span class="tx" style="left:127.50px;top:18.30px;font-size:8.3px;line-height:10px;color:#14141e;transform:scaleX(0.9464);">Selecione</span>
<span class="tx" style="left:171.50px;top:18.30px;font-size:8.3px;line-height:10px;color:#14141e;transform:scaleX(0.9481);">Desenhe</span>
<span class="tx" style="left:212.50px;top:18.30px;font-size:8.3px;line-height:10px;color:#14141e;transform:scaleX(0.9768);">Dimensão</span>
<span class="tx" style="left:258.50px;top:18.30px;font-size:8.3px;line-height:10px;color:#14141e;transform:scaleX(1.0698);">Modifique</span>
<span class="tx" style="left:306.50px;top:18.30px;font-size:8.3px;line-height:10px;color:#14141e;transform:scaleX(1.0307);">Salto</span>
<span class="tx" style="left:334.50px;top:18.30px;font-size:8.3px;line-height:10px;color:#14141e;transform:scaleX(1.0236);">Informação</span>
<span class="tx" style="left:387.50px;top:18.30px;font-size:8.3px;line-height:10px;color:#14141e;transform:scaleX(0.9403);">Camada</span>
<span class="tx" style="left:427.50px;top:18.30px;font-size:8.3px;line-height:10px;color:#14141e;transform:scaleX(1.0355);">Bloco</span>
<span class="tx" style="left:458.50px;top:18.30px;font-size:8.3px;line-height:10px;color:#14141e;transform:scaleX(0.9199);">Janela</span>
<span class="tx" style="left:490.50px;top:18.30px;font-size:8.3px;line-height:10px;color:#14141e;transform:scaleX(0.9647);">Miscelânea</span>
<span class="tx" style="left:540.50px;top:18.30px;font-size:8.3px;line-height:10px;color:#14141e;transform:scaleX(1.0599);">Ajuda</span>
<span class="tx" style="left:189.50px;top:77.50px;font-size:8.3px;line-height:10px;color:#080808;transform:scaleX(0.8843);">CAD.dwg</span>
<span class="tx" style="left:55.00px;top:412.00px;font-size:8.3px;line-height:10px;color:#080808;transform:scaleX(0.8993);clip-path:inset(3.4px 0 0 0);">Abrindo o desenho: C:\temp\croquis\2pdf\CAD.dwg...</span>
<span class="tx" style="left:55.00px;top:421.60px;font-size:8.3px;line-height:10px;color:#080808;transform:scaleX(0.8836);">Desenho carregado com sucesso: C:\temp\croquis\2pdf\CAD.dwg</span>
<span class="tx" style="left:55.00px;top:430.00px;font-size:8.3px;line-height:10px;color:#080808;transform:scaleX(0.8799);">Formato: R21 (2007) DWG Desenho (Teigha) (*.dwg)</span>
<span class="tx" style="left:53.00px;top:446.70px;font-size:8.3px;line-height:10px;color:#080808;transform:scaleX(0.8617);">Comando:</span>
<span class="tx" style="left:1.30px;top:462.80px;font-size:8.3px;line-height:10px;color:#080808;transform:scaleX(0.8329);">85;61</span>
<span class="tx" style="left:-1.50px;top:476.30px;font-size:8.3px;line-height:10px;color:#080808;transform:scaleX(0.8448);">@-85;61</span>
<span class="tx" style="left:145.00px;top:462.80px;font-size:8.3px;line-height:10px;color:#080808;transform:scaleX(0.9062);">105&lt;145°</span>
<span class="tx" style="left:145.00px;top:476.30px;font-size:8.3px;line-height:10px;color:#080808;transform:scaleX(0.8806);">@105&lt;145°</span>
<span class="tx" style="left:303.50px;top:464.80px;font-size:8.3px;line-height:10px;color:#080808;transform:scaleX(0.9523);">Selecione uma entidade ou</span>
<span class="tx" style="left:360.00px;top:475.20px;font-size:8.3px;line-height:10px;color:#080808;transform:scaleX(0.9512);">uma região</span>
<span class="tx" style="left:544.50px;top:470.20px;font-size:8.3px;line-height:10px;color:#080808;transform:scaleX(0.9683);">Nenhuma entidade foi selecionada.</span>
<span class="tx" style="left:621.50px;top:403.20px;font-size:8.3px;line-height:10px;color:#080808;transform:scaleX(0.8858);">100 &lt; 1000</span>
<span class="tx" style="left:663.50px;top:77.00px;font-size:8.3px;line-height:10px;color:#080808;transform:scaleX(0.8944);">Lista de</span>
<span class="tx" style="left:679.50px;top:105.60px;font-size:8.3px;line-height:10px;color:#0c0c28;transform:scaleX(0.8200);">0</span>
<span class="tx" style="left:679.50px;top:117.60px;font-size:8.3px;line-height:10px;color:#0c0c28;transform:scaleX(0.8200);">1</span>
<span class="tx" style="left:679.50px;top:129.60px;font-size:8.3px;line-height:10px;color:#0c0c28;transform:scaleX(0.8200);">2</span>
<span class="tx" style="left:679.50px;top:141.60px;font-size:8.3px;line-height:10px;color:#0c0c28;transform:scaleX(0.8200);">DEF</span>
<span class="tx" style="left:679.50px;top:153.60px;font-size:8.3px;line-height:10px;color:#0c0c28;transform:scaleX(0.8200);">FO</span>
<span class="tx" style="left:679.50px;top:165.60px;font-size:8.3px;line-height:10px;color:#0c0c28;transform:scaleX(0.8200);">FO</span>
<span class="tx" style="left:679.50px;top:177.60px;font-size:8.3px;line-height:10px;color:#0c0c28;transform:scaleX(0.8200);">G</span>
<span class="tx" style="left:679.50px;top:189.60px;font-size:8.3px;line-height:10px;color:#0c0c28;transform:scaleX(0.8200);">MA</span>
<span class="tx" style="left:679.50px;top:201.60px;font-size:8.3px;line-height:10px;color:#0c0c28;transform:scaleX(0.8200);">S</span>

<!-- icons -->
<svg style="left:0;top:0" width="690" height="487" viewBox="0 0 690 487" font-family="Liberation Sans, sans-serif">
<defs>
<linearGradient id="gb" x1="0" y1="0" x2="0" y2="1"><stop offset="0" stop-color="#5f97ea"/><stop offset="1" stop-color="#3c76d6"/></linearGradient>
<linearGradient id="gl" x1="0" y1="0" x2="1" y2="1"><stop offset="0" stop-color="#d6e6f8"/><stop offset="1" stop-color="#6ea2df"/></linearGradient>
<linearGradient id="gp" x1="0" y1="0" x2="0" y2="1"><stop offset="0" stop-color="#bdbdbd"/><stop offset="0.5" stop-color="#c6c6c6"/><stop offset="1" stop-color="#b4b4b4"/></linearGradient>
</defs>
<rect x="3" y="31" width="19" height="18.6" fill="url(#gp)" stroke="#8c8c8c" stroke-width="1"/>
<g transform="translate(9.5,35)"><path d="M0,0 L0,9.2 L2.2,7.2 L3.7,10.6 L5.1,10 L3.6,6.7 L6.4,6.5 Z" fill="#fdfdfd" stroke="#777" stroke-width="0.8" stroke-linejoin="round"/></g>
<line x1="34.5" y1="32" x2="34.5" y2="49" stroke="#b0b0b0" stroke-width="1" stroke-dasharray="1,1"/>
<line x1="173.5" y1="32" x2="173.5" y2="49" stroke="#b0b0b0" stroke-width="1" stroke-dasharray="1,1"/>
<line x1="329.5" y1="32" x2="329.5" y2="49" stroke="#b0b0b0" stroke-width="1" stroke-dasharray="1,1"/>
<line x1="79" y1="33" x2="79" y2="48" stroke="#cfcfcf" stroke-width="1"/>
<line x1="122.5" y1="33" x2="122.5" y2="48" stroke="#cfcfcf" stroke-width="1"/>
<line x1="145.5" y1="33" x2="145.5" y2="48" stroke="#cfcfcf" stroke-width="1"/>
<line x1="216.5" y1="33" x2="216.5" y2="48" stroke="#cfcfcf" stroke-width="1"/>
<line x1="239.5" y1="33" x2="239.5" y2="48" stroke="#cfcfcf" stroke-width="1"/>
<line x1="302.5" y1="33" x2="302.5" y2="48" stroke="#cfcfcf" stroke-width="1"/>
<line x1="415.5" y1="33" x2="415.5" y2="48" stroke="#cfcfcf" stroke-width="1"/>
<line x1="391" y1="33" x2="391" y2="48" stroke="#e2e2e2" stroke-width="1"/>
<g transform="translate(41,33)"><path d="M0.6,0.6 H12.6 V14.2 H0.6 Z" fill="#f9f9f9" stroke="#cfcfcf" stroke-width="0.9"/><path d="M0.6,14.3 H12.8" stroke="#a8a8a8" stroke-width="0.9"/><circle cx="11" cy="3" r="2.8" fill="#f2e02c"/><circle cx="11" cy="3" r="1" fill="#fbf6b0"/></g>
<defs><linearGradient id="gpap" x1="0" y1="0" x2="0" y2="1"><stop offset="0" stop-color="#fbfbfb"/><stop offset="1" stop-color="#a9a9a9"/></linearGradient><linearGradient id="gfold" x1="0" y1="0" x2="0" y2="1"><stop offset="0" stop-color="#7aa8e0"/><stop offset="1" stop-color="#4a7cc2"/></linearGradient></defs><path d="M59.3,34.4 L62.2,33.3 L62.2,45.4 L60.4,46.2 Z" fill="#6e6e6e"/><path d="M62,33.4 H71.6 L73,34.8 V39.4 H62 Z" fill="url(#gpap)" stroke="#a0a0a0" stroke-width="0.4"/><path d="M62.6,38.8 H75.2 L73,46.2 H60.3 Z" fill="url(#gfold)" stroke="#4774b6" stroke-width="0.5"/>
<g transform="translate(84,33)"><rect x="0.5" y="0.4" width="13" height="13.4" rx="1.8" fill="url(#gb)" stroke="#2c5fc4" stroke-width="1"/><rect x="2.6" y="1.6" width="8.8" height="5.2" fill="#f2f6fd"/><path d="M3.4,3.2 H10.6 M3.4,5 H10.6" stroke="#cddff6" stroke-width="0.7"/><rect x="2.9" y="8.6" width="6.9" height="4.8" fill="#dfe6f2"/><rect x="4" y="9.6" width="2.1" height="3" fill="#2a4fa6"/></g>
<g transform="translate(103,33)"><rect x="0.5" y="0.4" width="13" height="13.4" rx="1.8" fill="url(#gb)" stroke="#2c5fc4" stroke-width="1"/><rect x="2.6" y="1.6" width="8.8" height="5.2" fill="#f2f6fd"/><path d="M3.4,3.2 H10.6 M3.4,5 H10.6" stroke="#cddff6" stroke-width="0.7"/><rect x="2.9" y="8.6" width="6.9" height="4.8" fill="#dfe6f2"/><rect x="4" y="9.6" width="2.1" height="3" fill="#2a4fa6"/><path d="M5.6,7.6 L12.6,0.2 L14.8,2.2 L7.8,9.6 L4.8,10.4 Z" fill="#f6b21e" stroke="#fff" stroke-width="0.9" stroke-linejoin="round"/><path d="M5.6,7.6 L12.6,0.2 L14.8,2.2 L7.8,9.6 L4.8,10.4 Z" fill="#f6b21e" stroke="#d0641c" stroke-width="0.35"/><path d="M11.7,1.2 L12.6,0.2 L14.8,2.2 L13.9,3.2 Z" fill="#e04a2a"/><path d="M5.6,7.6 L7.8,9.6 L4.8,10.4 Z" fill="#f4dcb0"/></g>
<path d="M127.5,46.7 V40.2 Q127.4,36.2 131,37.2 L134.6,34.3 L138.2,37.2 Q141.8,36.2 141.7,40.2 V46.7 Z" fill="#141414"/><path d="M130.5,39.7 L130,36.5 L132.6,38.1 L134.6,35.5 L136.6,38.1 L139.2,36.5 L138.7,39.7 Z" fill="#f4b41a"/><text x="134.6" y="45.9" font-size="6.2" font-weight="bold" fill="#fff" text-anchor="middle" textLength="11.8" lengthAdjust="spacingAndGlyphs">SVG</text>
<g transform="translate(150,33)"><path d="M5.6,0.7 H13 V6 H5.6 Z" fill="#ececec" stroke="#bdbdbd" stroke-width="0.6"/><rect x="0.2" y="5.8" width="14.8" height="7.4" rx="1.6" fill="#d2d2d2" stroke="#b4b4b4" stroke-width="0.6"/><rect x="0.8" y="8.4" width="13.6" height="1.8" fill="#b2b2b2"/><rect x="1.6" y="10.8" width="12" height="1.6" fill="#ececec"/><circle cx="5.4" cy="4.6" r="3.2" fill="#a4c6f0" stroke="#a9b2c0" stroke-width="0.9"/><circle cx="4.6" cy="3.8" r="1.1" fill="#e6f0fc"/><path d="M9.8,7.4 L13,7.4 L11.4,9.2 Z" fill="#8e8e8e"/></g>
<g transform="translate(177,33.5)"><path d="M3.6,6.2 A5.1,5.1 0 1 1 7.2,12.1" fill="none" stroke="#a4a4a4" stroke-width="2.7"/><path d="M0,2 L0,9.9 L7.6,9.9 Z" fill="#a4a4a4"/></g>
<g transform="translate(212,33.5) scale(-1,1)"><path d="M3.6,6.2 A5.1,5.1 0 1 1 7.2,12.1" fill="none" stroke="#a4a4a4" stroke-width="2.7"/><path d="M0,2 L0,9.9 L7.6,9.9 Z" fill="#a4a4a4"/></g>
<g transform="translate(222,33)"><path d="M1.4,10.6 L9.2,1.4 L12.4,4 L4.6,13 L0.8,14 Z" fill="#dedede" stroke="#8a8a8a" stroke-width="0.8"/><path d="M2.6,10 L10,1.6" stroke="#5e5e5e" stroke-width="1.1"/><path d="M4.2,11 L11.2,2.8" stroke="#fafafa" stroke-width="1.2"/><path d="M1.4,10.6 L4.6,13 L0.8,14 Z" fill="#f6f6f6" stroke="#9a9a9a" stroke-width="0.5"/></g>
<path d="M249.6,42.2 C250.6,39 252,35.6 253.2,32.8 M248.6,41 C251.4,39.6 255.4,38.2 258.4,37.2" stroke="#b6b6b6" stroke-width="1.5" fill="none" stroke-linecap="round"/><ellipse cx="246.6" cy="41.6" rx="2.1" ry="1.6" fill="none" stroke="#a8a8a8" stroke-width="1.1"/><ellipse cx="252.6" cy="44.2" rx="1.5" ry="2.1" fill="none" stroke="#a8a8a8" stroke-width="1.1"/><circle cx="245.6" cy="46.2" r="0.8" fill="#909090"/>
<g transform="translate(264,33)"><rect x="1.5" y="0.8" width="9.4" height="9.4" fill="#f1f1f1" stroke="#cdcdcd" stroke-width="0.8"/><path d="M5,4 H14.6 V11 L12,14 H5 Z" fill="#fafafa" stroke="#c4c4c4" stroke-width="0.8"/><path d="M6.2,9.5 H13.4 V11 L11.6,13 H6.2 Z" fill="#d8d8d8"/><path d="M1.4,12.6 H3.8 M2.6,11.4 V13.8" stroke="#777" stroke-width="0.7"/></g>
<g transform="translate(283,32.5)"><rect x="0.8" y="2" width="12.8" height="13" rx="1.2" fill="#b9854c" stroke="#94632e" stroke-width="0.8"/><rect x="2.8" y="4.2" width="8.8" height="9.4" fill="#ececec"/><rect x="4" y="0.6" width="6.4" height="3.4" rx="1" fill="#8d8d8d"/><path d="M4,6.5 H10 M4,8.5 H10 M4,10.5 H10" stroke="#cfcfcf" stroke-width="0.7"/></g>
<text x="306.6" y="44.7" font-size="13.8" fill="#111" textLength="10.4" lengthAdjust="spacingAndGlyphs">A</text><text x="317.6" y="45" font-size="5.6" fill="#222" font-weight="bold">A</text><path d="M316.2,35 Q319.6,34.6 320.6,37.6" fill="none" stroke="#333" stroke-width="0.8"/><path d="M319.6,37.2 L321.6,37.2 L320.7,39 Z" fill="#333"/>
<path d="M338.2,41.2 L344.6,34 L347,36.2 L340.6,43.4 L336.6,44.6 Z" fill="#de2a20" stroke="#b01812" stroke-width="0.4"/><path d="M338.2,41.2 L340.6,43.4 L336.6,44.6 Z" fill="#f0cfa0"/><path d="M336.4,45.5 H346.8" stroke="#e8392c" stroke-width="0.9"/>
<g transform="translate(353.5,35)"><rect x="0.4" y="0.4" width="14" height="10.4" fill="#14148c" stroke="#0c0c60" stroke-width="0.8"/><path d="M2.4,8.6 H5.6 V6 H9 V3.4 H12.6" fill="none" stroke="#b8c4ff" stroke-width="0.9" stroke-dasharray="1.1,1.1"/></g>
<g transform="translate(373.5,33)"><circle cx="7.2" cy="7.4" r="6" fill="#fbfbfb" stroke="#151515" stroke-width="1.2"/><path d="M0.4,14 L13.6,0.6" stroke="#3a62d8" stroke-width="1"/></g>
<defs><linearGradient id="gp2" x1="0" y1="0" x2="0" y2="1"><stop offset="0" stop-color="#a9a9a9"/><stop offset="0.45" stop-color="#c8c8c8"/><stop offset="1" stop-color="#d6d6d6"/></linearGradient></defs><rect x="394.5" y="31" width="19.2" height="18.8" fill="url(#gp2)" stroke="#8c8c8c" stroke-width="1"/>
<rect x="397.90" y="33.70" width="1.1" height="1.1" fill="#454545"/><rect x="397.90" y="37.75" width="1.1" height="1.1" fill="#454545"/><rect x="397.90" y="41.80" width="1.1" height="1.1" fill="#454545"/><rect x="397.90" y="45.85" width="1.1" height="1.1" fill="#454545"/><rect x="402.20" y="33.70" width="1.1" height="1.1" fill="#454545"/><rect x="402.20" y="37.75" width="1.1" height="1.1" fill="#454545"/><rect x="402.20" y="41.80" width="1.1" height="1.1" fill="#454545"/><rect x="402.20" y="45.85" width="1.1" height="1.1" fill="#454545"/><rect x="406.50" y="33.70" width="1.1" height="1.1" fill="#454545"/><rect x="406.50" y="37.75" width="1.1" height="1.1" fill="#454545"/><rect x="406.50" y="41.80" width="1.1" height="1.1" fill="#454545"/><rect x="406.50" y="45.85" width="1.1" height="1.1" fill="#454545"/><rect x="410.80" y="33.70" width="1.1" height="1.1" fill="#454545"/><rect x="410.80" y="37.75" width="1.1" height="1.1" fill="#454545"/><rect x="410.80" y="41.80" width="1.1" height="1.1" fill="#454545"/><rect x="410.80" y="45.85" width="1.1" height="1.1" fill="#454545"/>
<defs><linearGradient id="glens" x1="0" y1="0" x2="0" y2="1"><stop offset="0" stop-color="#72abee"/><stop offset="1" stop-color="#4686de"/></linearGradient></defs>
<g transform="translate(420,33)"><path d="M9.6,9.8 L13,13.2" stroke="#505050" stroke-width="2.6" stroke-linecap="round"/><circle cx="5.8" cy="5.6" r="5.1" fill="url(#glens)" stroke="#c2c2c6" stroke-width="1.5"/><path d="M3,5.8 H8.6 M5.8,3 V8.6" stroke="#fff" stroke-width="1.6"/></g>
<g transform="translate(440,33)"><path d="M9.6,9.8 L13,13.2" stroke="#505050" stroke-width="2.6" stroke-linecap="round"/><circle cx="5.8" cy="5.6" r="5.1" fill="url(#glens)" stroke="#c2c2c6" stroke-width="1.5"/><path d="M3,5.8 H8.6" stroke="#fff" stroke-width="1.6"/></g>
<g transform="translate(459.5,33)"><path d="M9.6,9.8 L13,13.2" stroke="#505050" stroke-width="2.6" stroke-linecap="round"/><circle cx="5.8" cy="5.6" r="5.1" fill="url(#glens)" stroke="#c2c2c6" stroke-width="1.5"/><circle cx="5.8" cy="5.8" r="2.2" fill="none" stroke="#fff" stroke-width="1"/><path d="M5.8,1.6 V3.4 M5.8,8.2 V10 M1.6,5.8 H3.4 M8.2,5.8 H10" stroke="#fff" stroke-width="1"/></g>
<g transform="translate(478.5,33)"><path d="M9.6,9.8 L13,13.2" stroke="#b4b4b4" stroke-width="2.6" stroke-linecap="round"/><circle cx="5.8" cy="5.6" r="5.1" fill="#bdbdbd" stroke="#cfcfcf" stroke-width="1.5"/><rect x="3.4" y="3.4" width="4.8" height="4.8" fill="#e6e6e6" stroke="#a0a0a0" stroke-width="0.8"/></g>
<g transform="translate(498.5,33)"><path d="M9.6,9.8 L13,13.2" stroke="#505050" stroke-width="2.6" stroke-linecap="round"/><circle cx="5.8" cy="5.6" r="5.1" fill="url(#glens)" stroke="#c2c2c6" stroke-width="1.5"/><path d="M2.4,5.8 L5.6,3 V4.8 H9.2 V6.8 H5.6 V8.6 Z" fill="#fff"/></g>
<g transform="translate(517,32.5)"><rect x="0.5" y="0.5" width="13.4" height="9" fill="#fdfdfd" stroke="#5d8ed6" stroke-width="0.9"/><path d="M10.2,11.2 L13.8,14.6" stroke="#606060" stroke-width="2.2" stroke-linecap="round"/><circle cx="7.4" cy="8" r="4.2" fill="#4d8fdc" stroke="#aab3c0" stroke-width="1.1"/><ellipse cx="7.4" cy="7" rx="2.6" ry="1.6" fill="#9cc2f0"/></g>
<g transform="translate(536,32.5)"><path d="M10.4,10.8 L14.4,14.8" stroke="#606060" stroke-width="2.2" stroke-linecap="round"/><path d="M7,0.2 L13.8,7 L7,13.8 L0.2,7 Z" fill="#5a96de" stroke="#a9b7c8" stroke-width="0.8"/><path d="M7,2 V12 M2,7 H12" stroke="#fff" stroke-width="1.2"/><path d="M7,1 L8.6,3.2 H5.4 Z M7,13 L8.6,10.8 H5.4 Z M1,7 L3.2,5.4 V8.6 Z M13,7 L10.8,5.4 V8.6 Z" fill="#fff"/></g>
<rect x="4.5" y="55.5" width="24" height="15.4" rx="3.2" fill="#f3f3f3" stroke="#808080" stroke-width="1.3"/>
<g transform="translate(13.8,58)"><g transform="scale(0.82)"><path d="M0,0 L0,9.2 L2.2,7.2 L3.7,10.6 L5.1,10 L3.6,6.7 L6.4,6.5 Z" fill="#fdfdfd" stroke="#777" stroke-width="0.8" stroke-linejoin="round"/></g></g>
<line x1="31.5" y1="54" x2="31.5" y2="72" stroke="#d2d2d2" stroke-width="1"/>
<g transform="translate(62,77.5)"><circle cx="3.9" cy="3.7" r="3.2" fill="#e4f0f8" stroke="#1c2c78" stroke-width="1.6"/><path d="M4.4,3.9 L7.4,7.2" stroke="#eda01e" stroke-width="1.5" stroke-linecap="round"/><path d="M7,6.8 L7.6,7.5" stroke="#e0522a" stroke-width="1.4" stroke-linecap="round"/></g>
<rect x="337" y="77" width="10" height="10" rx="1.8" fill="#e8693c"/><path d="M339.8,79.8 L344.2,84.2 M344.2,79.8 L339.8,84.2" stroke="#fff" stroke-width="1.4"/>
<path d="M673.2,95 Q679,89.6 684.8,95 Q679,100.2 673.2,95 Z" fill="#111"/><circle cx="679" cy="94.7" r="1.9" fill="#e1e1e1"/><circle cx="679" cy="94.9" r="1.1" fill="#111"/>
<defs><radialGradient id="gm" cx="0.38" cy="0.32" r="0.75"><stop offset="0" stop-color="#ffffff"/><stop offset="0.6" stop-color="#f3f3f5"/><stop offset="1" stop-color="#b9bbc2"/></radialGradient></defs><g transform="translate(415,473.6) rotate(-24)"><path d="M0,-10.4 C4.6,-10.4 8.2,-4.5 8.2,2 C8.2,7.4 4.6,10.4 0,10.4 C-4.6,10.4 -8.2,7.4 -8.2,2 C-8.2,-4.5 -4.6,-10.4 0,-10.4 Z" fill="url(#gm)" stroke="#c4c6cc" stroke-width="0.8"/><path d="M-6.6,-2.6 Q0,1.2 6.6,-2.6" fill="none" stroke="#d4d6dc" stroke-width="0.8"/><ellipse cx="0" cy="-4.6" rx="2.6" ry="3" fill="#e4e6ea"/><rect x="-1.1" y="-6.6" width="2.2" height="4" rx="1.1" fill="#3c7ad4"/><path d="M0,-10.4 L-0.6,-12.4" stroke="#555" stroke-width="0.9"/></g>
<rect x="644.5" y="444.5" width="14" height="13" fill="#e1e1e1" stroke="#adadad" stroke-width="1"/><rect x="646.5" y="447" width="10" height="7.4" fill="#fff" stroke="#222" stroke-width="0.9"/><rect x="646.2" y="446.6" width="10.6" height="2.4" fill="#111"/>
</svg>
<svg style="left:0;top:0" width="690" height="487" viewBox="0 0 690 487" font-family="Liberation Sans, sans-serif">
<defs><pattern id="hatch" width="2" height="2" patternUnits="userSpaceOnUse" patternTransform="rotate(45)"><rect width="2" height="2" fill="#e8e8e8"/><rect width="1" height="2" fill="#8a8a8a"/></pattern></defs>
<circle cx="2.6" cy="7.3" r="3.5" fill="#dcecf6" stroke="#1c2c78" stroke-width="1.7"/><path d="M3.4,7.3 L6.5,10.9" stroke="#eda01e" stroke-width="1.6" stroke-linecap="round"/><path d="M1.2,5.6 L3.4,7.3" stroke="#fff" stroke-width="0.8"/>
<path d="M3.1000000000000005,95.1 H7.7 M5.4,92.8 V97.39999999999999" stroke="#151515" stroke-width="1.02" fill="none"/><path d="M14.099999999999998,101.6 H18.7 M16.4,99.3 V103.89999999999999" stroke="#151515" stroke-width="1.02" fill="none"/><path d="M3.8,106.7 H8.399999999999999 M6.1,104.4 V109.0" stroke="#151515" stroke-width="1.02" fill="none"/><path d="M21.4,108 L21.4,111.4 L18,111.4 Z" fill="#111"/><path d="M47.4,108 L47.4,111.4 L44,111.4 Z" fill="#111"/>
<path d="M29,105.5 L47,97.3" stroke="#151515" stroke-width="1.02"/>
<path d="M3,134.6 A15,14.6 0 0 1 18,120" fill="none" stroke="#151515" stroke-width="1.02"/><path d="M21.4,134.5 L21.4,137.9 L18,137.9 Z" fill="#111"/><path d="M47.4,134.5 L47.4,137.9 L44,137.9 Z" fill="#111"/>
<circle cx="37.3" cy="127.6" r="8.2" fill="none" stroke="#151515" stroke-width="1.02"/>
<ellipse cx="10.8" cy="154" rx="11.6" ry="3.6" transform="rotate(-43 10.8 154)" fill="none" stroke="#151515" stroke-width="1.02"/><path d="M21.4,161 L21.4,164.4 L18,164.4 Z" fill="#111"/><path d="M47.4,161 L47.4,164.4 L44,164.4 Z" fill="#111"/>
<path d="M30,151 C29.5,160 35,166.5 39.5,158.5 C43,152 47,145.5 47,152.5 C47,159.5 42,160.5 38.5,155 C35,149.5 30.5,143.5 30,151 Z" fill="none" stroke="#151515" stroke-width="1.02"/>
<path d="M19,184.7 L7.4,184.7 A3.8,3.8 0 0 1 7.2,177.2" fill="none" stroke="#151515" stroke-width="1.02"/><path d="M21.4,187.5 L21.4,190.9 L18,190.9 Z" fill="#111"/><path d="M47.4,187.5 L47.4,190.9 L44,190.9 Z" fill="#111"/>
<polygon points="38.6,177.2 35.9,181.9 30.5,181.9 27.8,177.2 30.5,172.5 35.9,172.5" fill="none" stroke="#151515" stroke-width="1.02"/><path d="M40,182 L43.8,176.3 L47.5,182 Z" fill="none" stroke="#151515" stroke-width="0.8"/><rect x="28.8" y="186" width="10.6" height="4.2" fill="none" stroke="#151515" stroke-width="1.02"/>
<path d="M2.4,208.4 L7.6,203.5 L18.4,203.5 L18.4,213.2 L2.4,213.2 Z" fill="url(#hatch)" stroke="#151515" stroke-width="1.02"/><circle cx="12.4" cy="208.6" r="2.3" fill="#f0f0f0" stroke="#151515" stroke-width="0.8"/><path d="M21.4,214.5 L21.4,217.9 L18,217.9 Z" fill="#111"/>
<text x="10.8" y="248" font-family="Liberation Serif, serif" font-size="24" text-anchor="middle" fill="#111" textLength="15.2" lengthAdjust="spacingAndGlyphs">A</text>
<path d="M30.5,234.8 V246 M45.4,234.8 V247 M30.5,236.2 H45.4" fill="none" stroke="#151515" stroke-width="1.02"/><path d="M30.5,236.2 L33.4,235 V237.4 Z M45.4,236.2 L42.5,235 V237.4 Z" fill="#151515"/><path d="M47.4,247.5 L47.4,250.9 L44,250.9 Z" fill="#111"/>
<rect x="2.4" y="260.2" width="17.4" height="14" rx="1.6" fill="#fdfdfd" stroke="#151515" stroke-width="1"/><path d="M4,272.6 L4,271 L7.8,266.6 L10.4,269.8 L12.8,267.4 L17.8,271.6 V272.6 Z" fill="#111"/><circle cx="15.6" cy="264.3" r="1.1" fill="#111"/>
<path d="M1,293.4 V308.6 H14.4 Z" fill="#bcbcbc" stroke="#7e7e7e" stroke-width="0.8"/><path d="M3.6,300.6 V306.2 H8.6 Z" fill="#ececec" stroke="#8a8a8a" stroke-width="0.5"/><path d="M2,297 L10,306 M2,301 L7,307 M4,296.5 L12,306" stroke="#9a9a9a" stroke-width="0.4"/><path d="M3.4,291.6 L5.6,289.6 L12,296.4 L11.8,298.8 L9.6,298.4 Z" fill="#e0261c" stroke="#a81a12" stroke-width="0.4"/><path d="M9.6,298.4 L12,296.4 L12.2,299.2 Z" fill="#3a2a20"/><path d="M17.9,290.4 L16,305.8 M17.9,290.4 L19.8,305.8" stroke="#4a4a4a" stroke-width="1" fill="none"/><path d="M21.4,306 L21.4,309.4 L18,309.4 Z" fill="#111"/>
<rect x="28.8" y="296.5" width="17.4" height="6.2" rx="0.8" fill="#fdfdfd" stroke="#151515" stroke-width="1"/><path d="M33,297 V299.6 M37.5,297 V299.6 M42,297 V299.6" stroke="#151515" stroke-width="0.7"/>
<rect x="2.6" y="319.6" width="12.8" height="10" fill="none" stroke="#7a7a7a" stroke-width="1.02"/><circle cx="13" cy="328.4" r="6.3" fill="none" stroke="#6a6a6a" stroke-width="1.02"/>
<path d="M28.8,325.8 L42.6,318.2" stroke="#e03a2a" stroke-width="1"/><g transform="translate(36.4,322.6)"><path d="M0,0 L0,8.6 L2,6.8 L3.5,10 L4.8,9.4 L3.4,6.3 L6,6.1 Z" fill="#fdfdfd" stroke="#777" stroke-width="0.7" stroke-linejoin="round"/></g><path d="M47.4,333.5 L47.4,336.9 L44,336.9 Z" fill="#111"/>
<path d="M2.8,356.6 L11.3,350 L18.9,354.8 L18.9,361.4 L8.6,367 L2.8,362.3 Z M2.8,356.6 L8.8,360.4 L18.9,354.8 M8.8,360.4 L8.6,367" fill="none" stroke="#151515" stroke-width="1.02" stroke-linejoin="round"/><path d="M21.4,366.5 L21.4,369.9 L18,369.9 Z" fill="#111"/>
</svg>

</body>
</html>
